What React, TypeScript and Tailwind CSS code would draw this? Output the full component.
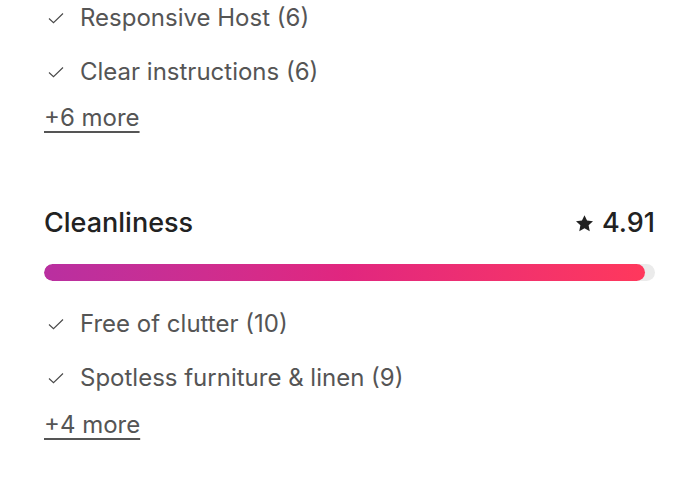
import React from 'react';

const Check = () => (
  <svg viewBox="0 0 32 32" className="w-[16px] h-[16px] shrink-0 text-[#484848]" fill="none" stroke="currentColor" strokeWidth={2.2}>
    <path d="M2 17 L11 25.5 L30 7" />
  </svg>
);

const Item: React.FC<{ label: string }> = ({ label }) => (
  <div className="flex items-center h-[36px]">
    <div className="w-[36px] flex items-center pl-[4px]">
      <Check />
    </div>
    <span className="text-[24px] text-[#555555]">{label}</span>
  </div>
);

const More: React.FC<{ label: string }> = ({ label }) => (
  <div className="h-[36px] flex items-center">
    <span className="text-[24px] text-[#555555] underline underline-offset-[5px] decoration-[1.5px]">{label}</span>
  </div>
);

export default function App() {
  return (
    <div
      className="w-[700px] h-[500px] bg-white overflow-hidden pl-[44px] pr-[45px]"
      style={{ fontFamily: 'Inter, "Noto Sans", sans-serif' }}
    >
      <div className="flex flex-col gap-[18px]">
        <Item label="Responsive Host (6)" />
        <Item label="Clear instructions (6)" />
      </div>
      <div className="mt-[10px]">
        <More label="+6 more" />
      </div>

      {/* Cleanliness rating */}
      <div className="mt-[69px] flex items-center justify-between h-[36px]">
        <span className="text-[27px] font-medium text-[#222222]">Cleanliness</span>
        <span className="flex items-center gap-[7px] text-[27px] font-medium text-[#222222]">
          <svg viewBox="0 0 24 24" className="w-[21px] h-[21px]" fill="currentColor">
            <path d="M12 2.5l2.9 6.2 6.8.8-5 4.6 1.3 6.7L12 17.5l-6 3.3 1.3-6.7-5-4.6 6.8-.8z" />
          </svg>
          4.91
        </span>
      </div>

      <div className="mt-[23px] h-[17px] rounded-full bg-[#ebebeb] overflow-hidden">
        <div className="h-full w-[98.4%] rounded-full bg-gradient-to-r from-[#b92fa0] via-[#e1267f] to-[#ff385c]" />
      </div>

      <div className="mt-[25px] flex flex-col gap-[18px]">
        <Item label="Free of clutter (10)" />
        <Item label="Spotless furniture & linen (9)" />
      </div>
      <div className="mt-[11px]">
        <More label="+4 more" />
      </div>
    </div>
  );
}
